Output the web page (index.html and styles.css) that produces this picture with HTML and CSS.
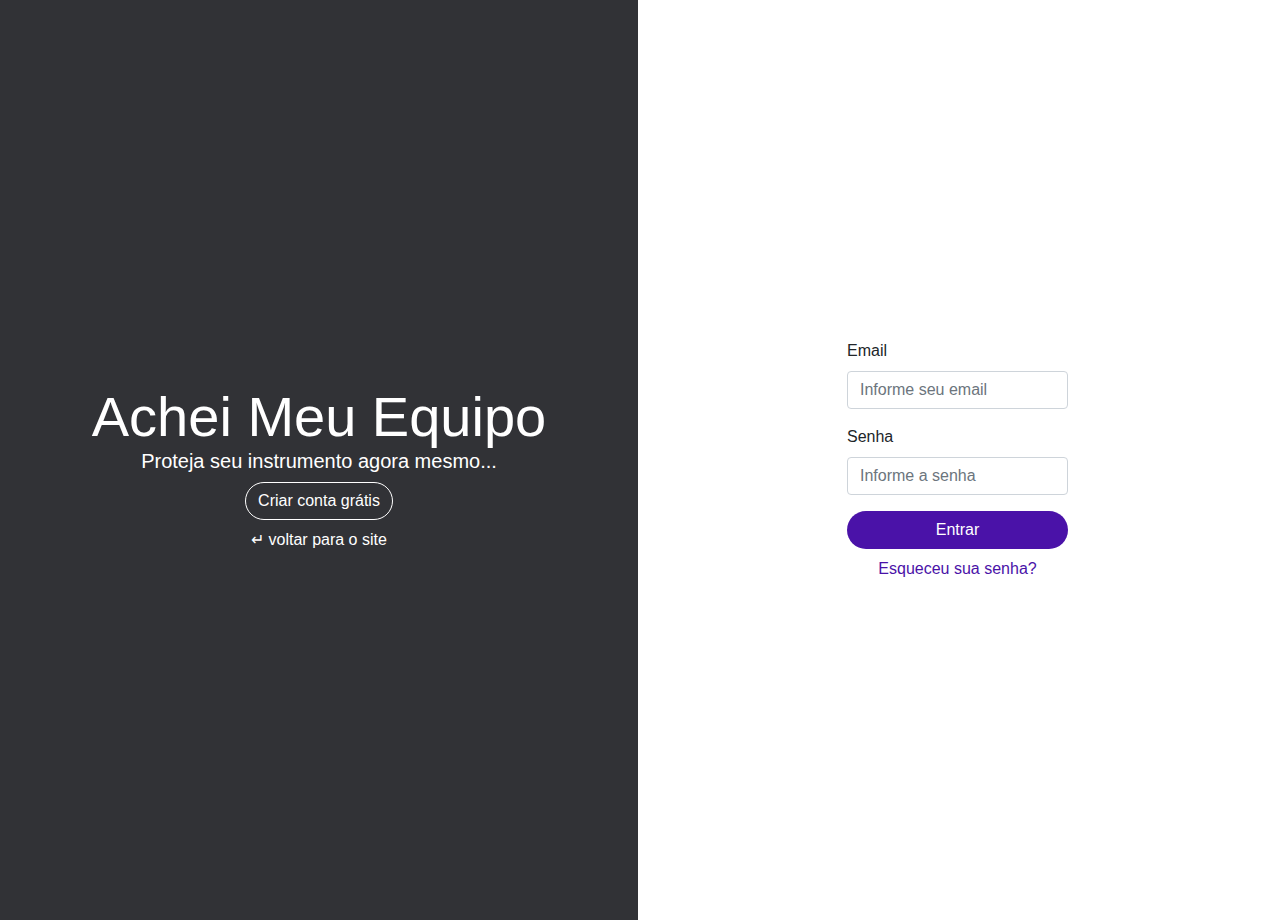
FILE: index.html
```html
<!DOCTYPE html>
<html lang="pt-BR">
<head>
<meta charset="utf-8">
<title>Achei Meu Equipo - Login</title>
<link rel="stylesheet" href="styles.css">
</head>
<body>
<div class="page">
  <section class="hero">
    <div class="hero-inner">
      <h1 class="title">Achei Meu Equipo</h1>
      <p class="lead">Proteja seu instrumento agora mesmo...</p>
      <a class="btn-outline" href="#">Criar conta grátis</a>
      <a class="back" href="#">↵ voltar para o site</a>
    </div>
  </section>
  <section class="login">
    <form class="form">
      <label class="label" for="email">Email</label>
      <input class="input" id="email" type="email" placeholder="Informe seu email">
      <label class="label" for="senha">Senha</label>
      <input class="input" id="senha" type="password" placeholder="Informe a senha">
      <button class="btn-primary" type="button">Entrar</button>
      <a class="forgot" href="#">Esqueceu sua senha?</a>
    </form>
  </section>
</div>
</body>
</html>
```
FILE: styles.css
```css
* { box-sizing: border-box; }
html, body { margin: 0; padding: 0; height: 100%; }
body {
  font-family: "Liberation Sans", Arial, sans-serif;
  font-size: 16px;
  line-height: 1.5;
  color: #212529;
  background: #fff;
}
.page {
  display: flex;
  height: 920px;
}
.hero {
  width: 638px;
  background: #313236;
  color: #fff;
  display: flex;
  align-items: center;
  justify-content: center;
}
.hero-inner {
  display: flex;
  flex-direction: column;
  align-items: center;
  text-align: center;
  padding-top: 15px;
}
.title {
  margin: 0;
  font-size: 56px;
  font-weight: 400;
  line-height: 1.2;
}
.lead {
  margin: -4px 0 0;
  font-size: 20px;
  line-height: 1.5;
}
.btn-outline {
  margin-top: 6px;
  display: inline-block;
  color: #fff;
  text-decoration: none;
  border: 1px solid #fff;
  border-radius: 20px;
  padding: 6px 12px;
  font-size: 16px;
  line-height: 1.5;
}
.back {
  margin-top: 8px;
  color: #fff;
  text-decoration: none;
  font-size: 16px;
}
.login {
  flex: 1;
  display: flex;
  align-items: center;
  justify-content: center;
}
.form {
  width: 221px;
  display: flex;
  flex-direction: column;
  margin-left: 2px;
}
.label {
  margin-bottom: 8px;
  font-size: 16px;
}
.input {
  height: 38px;
  padding: 6px 12px;
  font-family: inherit;
  font-size: 16px;
  color: #495057;
  border: 1px solid #ced4da;
  border-radius: 4px;
  margin-bottom: 16px;
}
.input::placeholder { color: #6c757d; }
.btn-primary {
  height: 38px;
  border: none;
  border-radius: 19px;
  background: #4a12a8;
  color: #fff;
  font-family: inherit;
  font-size: 16px;
  margin-top: 0;
}
.forgot {
  margin-top: 8px;
  text-align: center;
  color: #4a12a8;
  text-decoration: none;
}
```
